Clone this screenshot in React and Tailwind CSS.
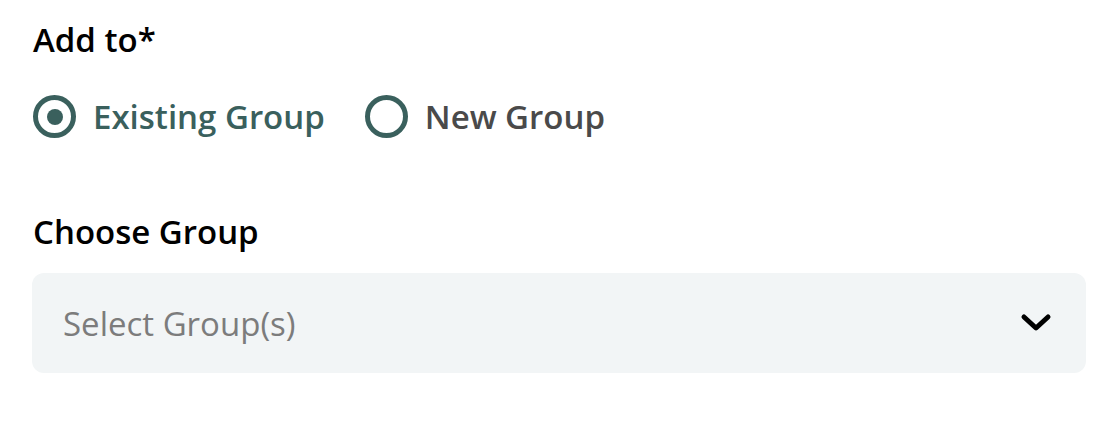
import { useState } from 'react';

const font = { fontFamily: '"Open Sans", "Noto Sans", sans-serif' };

const Radio = ({ label, checked, onClick }) => (
  <button type="button" onClick={onClick} className="flex items-center gap-[17px] cursor-pointer">
    <span className="flex items-center justify-center w-[43px] h-[43px] rounded-full border-[5px] border-[#3a605d]">
      {checked && <span className="w-[16px] h-[16px] rounded-full bg-[#3a605d]" />}
    </span>
    <span className={`text-[33px] font-semibold leading-none ${checked ? 'text-[#3a605d]' : 'text-[#4a4a4a]'}`}>
      {label}
    </span>
  </button>
);

export default function App() {
  const [mode, setMode] = useState('existing');

  return (
    <div className="w-[1097px] h-[427px] bg-white pl-[32px] pr-[11px] pt-[20px]" style={font}>
      {/* Add to */}
      <h3 className="text-[33px] font-semibold text-black leading-[40px] pl-[1px]">Add to*</h3>

      <div className="flex items-center gap-[40px] mt-[35px] pl-[1px]">
        <Radio label="Existing Group" checked={mode === 'existing'} onClick={() => setMode('existing')} />
        <Radio label="New Group" checked={mode === 'new'} onClick={() => setMode('new')} />
      </div>

      {/* Choose group */}
      <h3 className="text-[33px] font-semibold text-black leading-[40px] mt-[74px] pl-[1px]">Choose Group</h3>

      <div className="flex items-center justify-between h-[100px] mt-[21px] rounded-[12px] bg-[#f2f5f6] pl-[31px] pr-[34px]">
        <span className="text-[33px] text-[#7c7c7c] leading-none">Select Group(s)</span>
        <svg width="32" height="20" viewBox="0 0 32 20" fill="none">
          <polyline points="4,4 16,15 28,4" stroke="#000" strokeWidth="5" strokeLinecap="round" strokeLinejoin="round" />
        </svg>
      </div>
    </div>
  );
}
